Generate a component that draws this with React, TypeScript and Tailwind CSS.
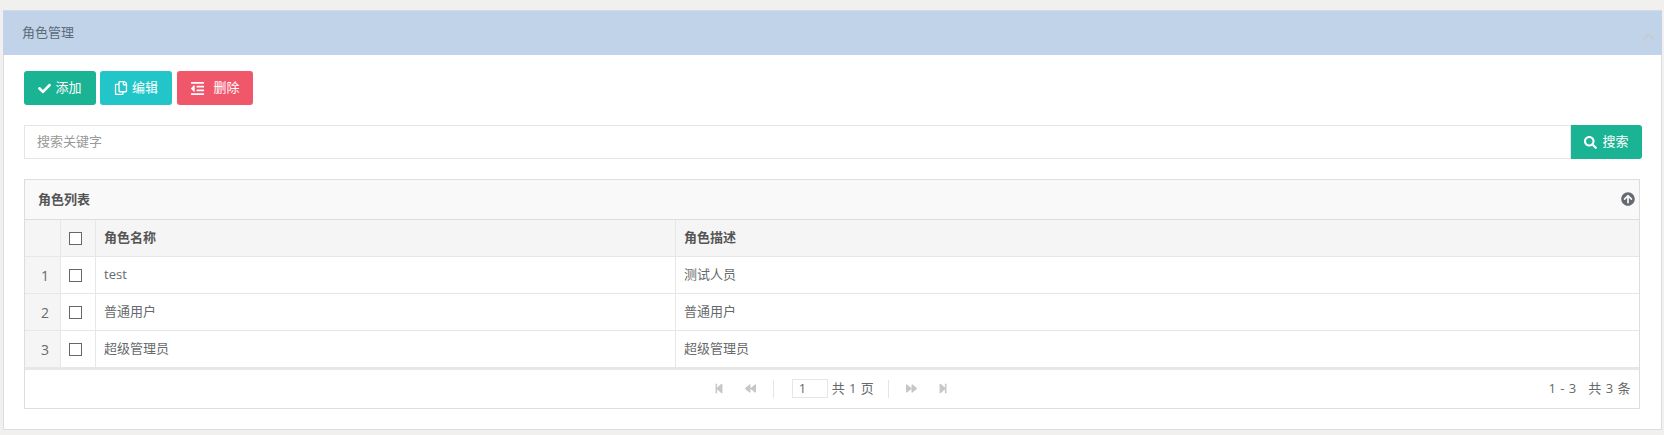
import { FaArrowCircleUp, FaBackward, FaCheck, FaChevronUp, FaForward, FaOutdent, FaSearch, FaStepBackward, FaStepForward } from "react-icons/fa";
import { FaRegCopy } from "react-icons/fa";

const rows = [
  { no: 1, name: "test", desc: "测试人员" },
  { no: 2, name: "普通用户", desc: "普通用户" },
  { no: 3, name: "超级管理员", desc: "超级管理员" },
];

const Box = () => <span className="block w-[13px] h-[13px] border border-[#666] bg-white" />;

export default function App() {
  return (
    <div className="h-[435px] bg-[#f1f0ef] pt-[10px] pl-[3px] pr-[2px] text-[13px] text-[#676a6c] font-['Open_Sans','Noto_Sans_CJK_SC',sans-serif] overflow-hidden">
      <div className="h-[420px] bg-white border border-[#d8dee6] border-t-0">
        <div className="h-[45px] -ml-px -mr-px bg-[#c1d3e8] border-t border-[#d3dbe6] flex items-center justify-between pl-[19px] pr-[6px]">
          <span className="text-[13px] text-[#5b6b78]">角色管理</span>
          <FaChevronUp className="w-[13px] h-[13px] text-[#c5ccd4] mt-[7px] mr-[1px]" />
        </div>

        <div className="pl-[20px] pr-[19px]">
          <div className="flex mt-4 text-white text-[13px]">
            <button className="w-[72px] h-[34px] rounded-[3px] bg-[#1ab394] flex items-center justify-center gap-[4px]">
              <FaCheck className="w-[13px] h-[13px]" />添加
            </button>
            <button className="w-[72px] h-[34px] ml-1 rounded-[3px] bg-[#23c6c8] flex items-center justify-center gap-[4px]">
              <FaRegCopy className="w-[14px] h-[14px]" />编辑
            </button>
            <button className="w-[76px] h-[34px] ml-[5px] rounded-[3px] bg-[#f1576a] flex items-center justify-center gap-[8px]">
              <FaOutdent className="w-[15px] h-[15px]" />删除
            </button>
          </div>

          <div className="flex mt-5 h-[34px]">
            <div className="flex-1 border border-[#e5e6e7] flex items-center pl-3 text-[13px] text-[#999]">搜索关键字</div>
            <button className="w-[71px] bg-[#1ab394] text-white rounded-r-[3px] flex items-center justify-center gap-[5px] text-[13px]">
              <FaSearch className="w-[13px] h-[13px]" />搜索
            </button>
          </div>

          <div className="mt-5 mr-[2px] border border-[#dddddd] h-[230px]">
            <div className="h-[40px] bg-[#f9f9f9] border-b border-[#dddddd] flex items-center justify-between pl-[13px] pr-[4px]">
              <span className="font-bold text-[13px] text-[#555]">角色列表</span>
              <FaArrowCircleUp className="w-[14px] h-[14px] text-[#666a70] -mt-[1px]" />
            </div>
            <div className="grid grid-cols-[36px_35px_580px_1fr] text-[13px]">
              <div className="h-[37px] bg-[#f5f5f5] border-r border-b border-[#e7e7e7]" />
              <div className="h-[37px] bg-[#f5f5f5] border-r border-b border-[#e7e7e7] flex items-center pl-[8px]"><Box /></div>
              <div className="h-[37px] bg-[#f5f5f5] border-r border-b border-[#e7e7e7] flex items-center pl-[8px] font-bold text-[#555]">角色名称</div>
              <div className="h-[37px] bg-[#f5f5f5] border-b border-[#e7e7e7] flex items-center pl-[8px] font-bold text-[#555]">角色描述</div>
              {rows.map((r) => (
                <div key={r.no} className="contents">
                  <div className="h-[37px] bg-[#f5f5f5] border-r border-b border-[#e7e7e7] flex items-center justify-end pr-[11px] text-[14px]">{r.no}</div>
                  <div className="h-[37px] border-r border-b border-[#e7e7e7] flex items-center pl-[8px]"><Box /></div>
                  <div className="h-[37px] border-r border-b border-[#e7e7e7] flex items-center pl-[8px]">{r.name}</div>
                  <div className="h-[37px] border-b border-[#e7e7e7] flex items-center pl-[8px]">{r.desc}</div>
                </div>
              ))}
            </div>
            <div className="h-[39px] border-t-2 border-[#e7e7e7] flex items-center justify-between pr-2 relative">
              <div className="flex-1 flex items-center justify-center text-[#c5c7c9] pl-[6px]">
                <FaStepBackward className="w-[10px] h-[11px]" />
                <FaBackward className="w-[13px] h-[11px] ml-[20px]" />
                <span className="w-px h-[18px] bg-[#e5e5e5] ml-[16px]" />
                <span className="w-[36px] h-[19px] ml-[18px] border border-[#e5e6e7] text-[#676a6c] text-[13px] leading-[17px] pl-[6px]">1</span>
                <span className="ml-[4px] text-[#676a6c] text-[13px] tracking-[0.5px]">共 1 页</span>
                <span className="w-px h-[18px] bg-[#e5e5e5] ml-[14px]" />
                <FaForward className="w-[13px] h-[11px] ml-[16px]" />
                <FaStepForward className="w-[10px] h-[11px] ml-[20px]" />
              </div>
              <span className="absolute right-2 text-[13px] tracking-[0.5px] whitespace-pre">1 - 3   共 3 条</span>
            </div>
          </div>
        </div>
      </div>
    </div>
  );
}
